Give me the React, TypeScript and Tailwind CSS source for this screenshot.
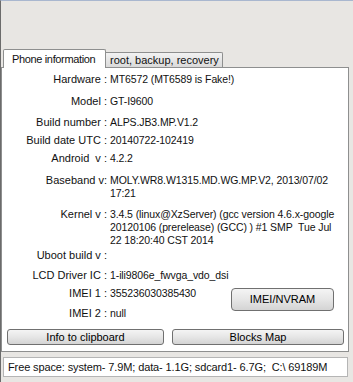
import React from 'react';

const font = { fontFamily: '"Liberation Sans", Arial, sans-serif' };

const Row: React.FC<{ label: string; sep?: string; className?: string; children?: React.ReactNode }> = ({
  label,
  sep = ' :',
  className = '',
  children,
}) => (
  <div className={`flex leading-[13px] ${className}`}>
    <div className="w-[105px] shrink-0 text-right whitespace-pre">
      {label}
      {sep}
    </div>
    <div className="ml-[3px] whitespace-nowrap text-[10.5px] tracking-[-0.1px]">{children}</div>
  </div>
);

const btn =
  'border border-[#707070] rounded-[3px] bg-gradient-to-b from-[#f4f4f4] via-[#e6e6e6] to-[#d4d4d4] text-center text-black text-[11px]';

export default function App() {
  return (
    <div
      className="w-[353px] h-[382px] bg-[#e8e6e3] text-[11px] text-[#111] border-t border-t-[#a9b7cf] border-l border-l-[#6b6b6b] overflow-hidden"
      style={font}
    >
      {/* tabs */}
      <div className="flex items-end h-[66px] pl-[2px]">
        <div className="relative z-10 h-[19px] w-[103px] -mb-px bg-white border border-[#8e8f8f] border-b-0 rounded-t-[2px] pl-[8px] pt-[3px] leading-[13px] tracking-[-0.35px]">
          Phone information
        </div>
        <div className="h-[15px] w-[117px] border border-[#8e8f8f] border-l-0 border-b-0 rounded-tr-[2px] bg-gradient-to-b from-[#f2f2f2] to-[#dadada] pl-[4px] leading-[14px]">
          root, backup, recovery
        </div>
      </div>

      {/* panel */}
      <div className="w-[348px] h-[285px] bg-white border border-[#8e8f8f] pt-[5px]">
        <Row label="Hardware">MT6572 (MT6589 is Fake!)</Row>
        <Row label="Model" className="mt-[9px]">GT-I9600</Row>
        <Row label="Build number" className="mt-[8px]">ALPS.JB3.MP.V1.2</Row>
        <Row label="Build date UTC" className="mt-[5px]">20140722-102419</Row>
        <Row label="Android  v" className="mt-[5px]">4.2.2</Row>
        <Row label="Baseband v" sep=":" className="mt-[9px]">
          MOLY.WR8.W1315.MD.WG.MP.V2, 2013/07/02
          <br />
          17:21
        </Row>
        <Row label="Kernel v" className="mt-[8px]">
          3.4.5 (linux@XzServer) (gcc version 4.6.x-google
          <br />
          20120106 (prerelease) (GCC) ) #1 SMP&nbsp; Tue Jul
          <br />
          22 18:20:40 CST 2014
        </Row>
        <Row label="Uboot build v" className="mt-[2px]" />
        <Row label="LCD Driver IC" className="mt-[7px]">1-ili9806e_fwvga_vdo_dsi</Row>
        <div className="flex items-start">
          <div className="w-[229px]">
            <Row label="IMEI 1" className="mt-[5px]">355236030385430</Row>
            <Row label="IMEI 2" className="mt-[7px]">null</Row>
          </div>
          <button
            className={`mt-[6px] w-[103px] h-[23px] rounded-[4px] border-[#6f6f6f] ${btn}`}
            style={font}
          >
            IMEI/NVRAM
          </button>
        </div>
        <div className="flex gap-[8px] pl-[5px] mt-[9px]">
          <button className={`w-[157px] h-[16px] leading-[14px] ${btn}`} style={font}>
            Info to clipboard
          </button>
          <button className={`w-[172px] h-[16px] leading-[14px] ${btn}`} style={font}>
            Blocks Map
          </button>
        </div>
      </div>

      {/* status */}
      <div className="ml-[2px] mt-[5px] w-[345px] h-[20px] bg-white border border-[#b5b5b5] pl-[4px] leading-[18px] tracking-[-0.12px]">
        Free space: system- 7.9M; data- 1.1G; sdcard1- 6.7G;&nbsp; C:\ 69189M
      </div>
    </div>
  );
}
